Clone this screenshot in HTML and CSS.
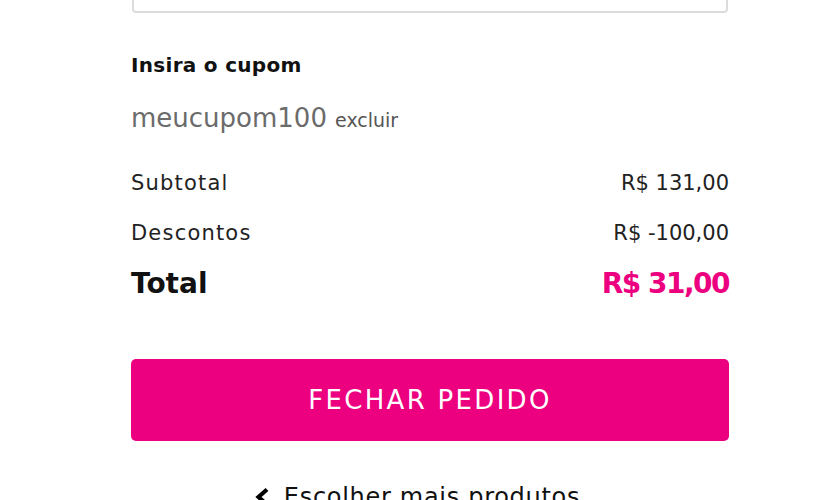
FILE: index.html
```html
<!DOCTYPE html>
<html lang="pt-BR">
<head>
    <meta charset="UTF-8">
    <meta name="viewport" content="width=device-width, initial-scale=1.0">
    <title>Carrinho</title>
    <link rel="stylesheet" href="styles.css">
</head>
<body>
    <div class="resumo">
        <div class="campo"></div>

        <p class="cupom-label">Insira o cupom</p>
        <p class="cupom">
            <span class="cupom__codigo">meucupom100</span>
            <a class="cupom__excluir" href="#">excluir</a>
        </p>

        <div class="linha">
            <span class="linha__nome">Subtotal</span>
            <span>R$ 131,00</span>
        </div>
        <div class="linha">
            <span class="linha__nome">Descontos</span>
            <span>R$ -100,00</span>
        </div>
        <div class="linha linha--total">
            <span>Total</span>
            <span class="linha__valor">R$ 31,00</span>
        </div>

        <button class="btn-fechar">FECHAR PEDIDO</button>

        <a class="voltar" href="#">
            <svg width="16" height="20" viewBox="0 0 16 20">
                <path d="M13 2.5 L4.5 10 L13 17.5" fill="none" stroke="#000" stroke-width="4.2" stroke-linejoin="miter"/>
            </svg>
            Escolher mais produtos
        </a>
    </div>
</body>
</html>
```

FILE: styles.css
```css
* { box-sizing: border-box; }

body {
    margin: 0;
    font-family: "DejaVu Sans", sans-serif;
    color: #1a1a1a;
    background: #fff;
    overflow: hidden;
}

.resumo {
    width: 598px;
    margin-left: 131px;
}

.campo {
    height: 50px;
    margin-top: -37px;
    margin-left: 1px;
    margin-right: 1px;
    border: 2px solid #dcdcdc;
    border-radius: 4px;
}

.cupom-label {
    margin: 39px 0 0;
    font-size: 20px;
    line-height: 26px;
    font-weight: 700;
    letter-spacing: 0.3px;
    color: #111;
}

.cupom {
    margin: 23px 0 0;
    line-height: 34px;
}

.cupom__codigo {
    font-size: 26px;
    color: #6b6b6b;
}

.cupom__excluir {
    font-size: 19px;
    color: #555;
    text-decoration: none;
    margin-left: 3px;
}

.linha {
    display: flex;
    justify-content: space-between;
    align-items: center;
    height: 50px;
    font-size: 21px;
    color: #222;
}

.linha__nome { letter-spacing: 1.2px; }

.cupom + .linha { margin-top: 19px; }

.linha--total {
    font-size: 28px;
    font-weight: 700;
    color: #111;
}

.linha__valor {
    color: #ec0080;
    letter-spacing: -1.5px;
}

.btn-fechar {
    display: block;
    width: 100%;
    height: 82px;
    margin-top: 51px;
    border: none;
    border-radius: 5px;
    background: #ec0080;
    color: #fff;
    font-family: inherit;
    font-size: 26px;
    letter-spacing: 2.3px;
    cursor: pointer;
}

.voltar {
    display: flex;
    justify-content: center;
    align-items: center;
    gap: 14px;
    margin-top: 41px;
    padding-right: 26px;
    font-size: 24px;
    line-height: 30px;
    letter-spacing: 0.7px;
    color: #111;
    text-decoration: none;
}
```
